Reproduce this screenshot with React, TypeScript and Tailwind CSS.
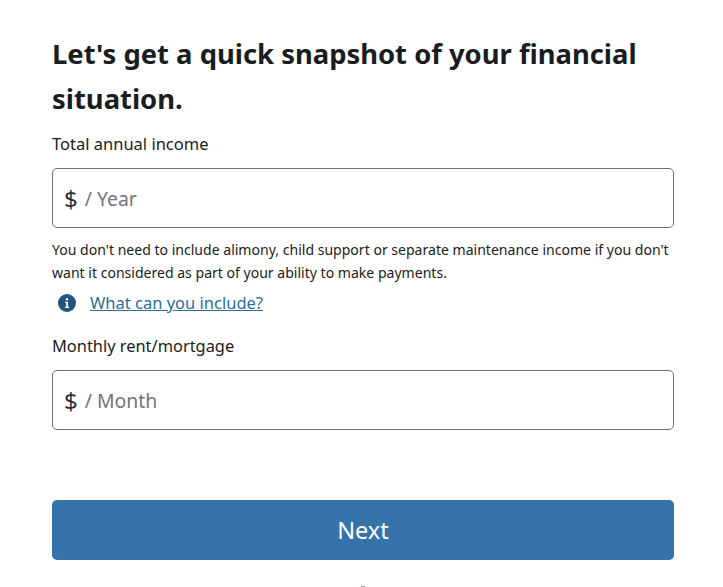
const font = "font-['Noto_Sans',sans-serif]";

function MoneyInput({ unit }: { unit: string }) {
  return (
    <div className="flex items-center h-[60px] rounded-[5px] border border-[#6b7177] bg-white pl-[11px] pt-px leading-none">
      <span className="text-[24px] text-[#2b2f33]">$</span>
      <span className="ml-[7px] text-[19.4px] text-[#6f767c]">/ {unit}</span>
    </div>
  );
}

export default function App() {
  return (
    <div className={`${font} w-[723px] h-[587px] overflow-hidden bg-white pl-[52px] pr-[49px] pt-[31px] text-[#1a1d20]`}>
      <h1 className="text-[27.4px] leading-[45px] font-bold">
        Let's get a quick snapshot of your financial situation.
      </h1>
      <div className="mt-[11px] text-[16.5px] leading-6">Total annual income</div>
      <div className="mt-[12px]"><MoneyInput unit="Year" /></div>
      <p className="mt-[10px] text-[14.05px] leading-[23px]">
        You don't need to include alimony, child support or separate maintenance income if you don't want it considered as part of your ability to make payments.
      </p>
      <div className="mt-[7px] flex items-center gap-[14px] pl-[6px]">
        <svg width="18" height="18" viewBox="0 0 18 18">
          <circle cx="9" cy="9" r="9" fill="#23547e" />
          <circle cx="9" cy="5.2" r="1.2" fill="#fff" />
          <path d="M7 7.8h3v5h1.2v1.2H6.9v-1.2h1.3V9H7z" fill="#fff" />
        </svg>
        <a className="text-[16.5px] leading-6 text-[#2a6f9e] underline">What can you include?</a>
      </div>
      <div className="mt-[19px] text-[16.4px] leading-6">Monthly rent/mortgage</div>
      <div className="mt-[12px]"><MoneyInput unit="Month" /></div>
      <button className="mt-[70px] w-full h-[60px] rounded-[5px] bg-[#3574ab] pt-[2px] text-white text-[23.5px]">Next</button>
      <div className="mt-[26px] mx-auto h-px w-1 bg-gray-400" />
    </div>
  );
}
